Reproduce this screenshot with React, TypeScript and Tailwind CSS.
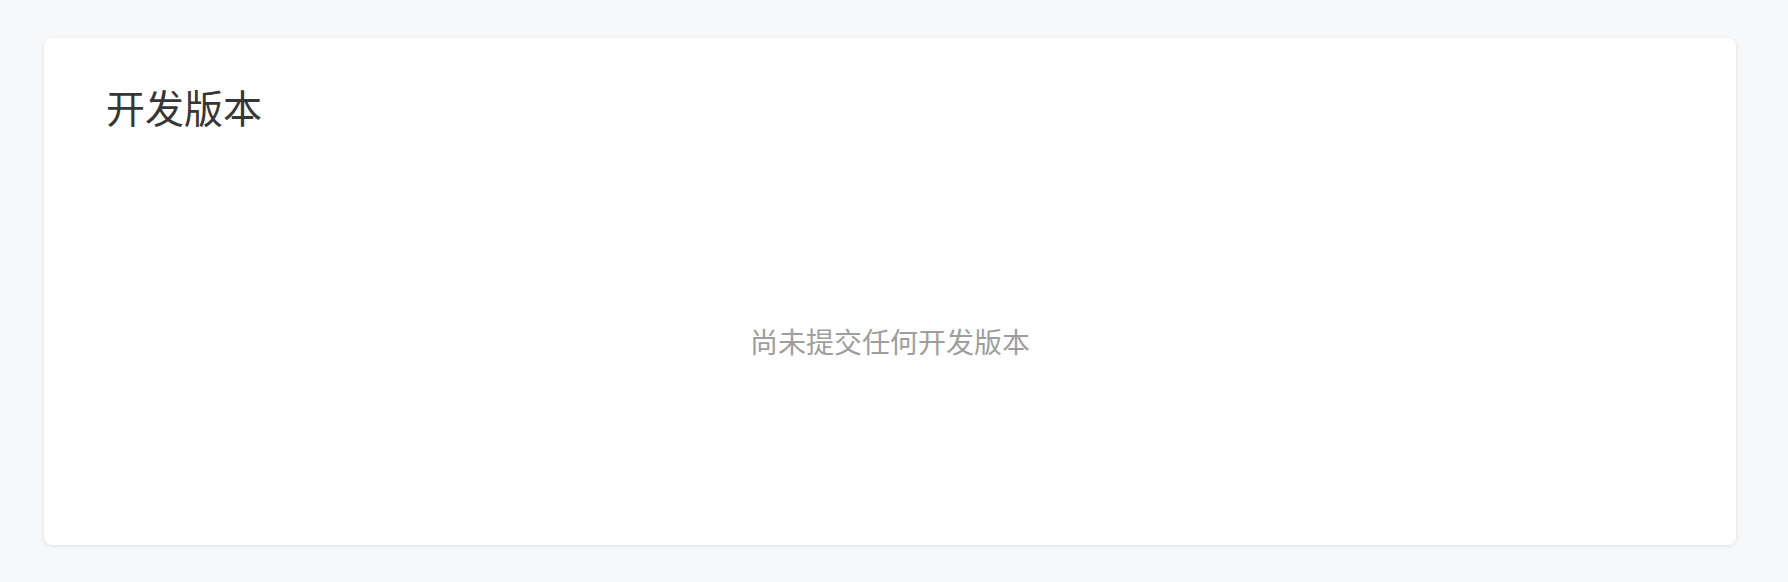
export default function App() {
  return (
    <div
      className="w-[1788px] h-[582px] bg-[#f7f8fa] pt-[38px] pl-[44px]"
      style={{ fontFamily: '"Noto Sans", "Noto Sans CJK SC", sans-serif' }}
    >
      <div className="w-[1692px] h-[507px] bg-white rounded-lg shadow-[0_1px_4px_rgba(0,0,0,0.1)] flex flex-col">
        <div className="pt-[40px] pl-[62px] pr-[62px] text-[39px] leading-[60px] text-[#363636]">开发版本</div>
        <div className="flex-1 flex items-center justify-center">
          <span className="text-[28px] leading-[40px] text-[#9e9e9e]">尚未提交任何开发版本</span>
        </div>
      </div>
    </div>
  );
}
